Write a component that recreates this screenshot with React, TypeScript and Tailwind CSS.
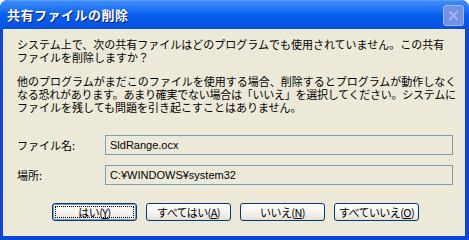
import React from "react";

const jp = { fontFamily: '"Noto Sans CJK JP", "Noto Sans", sans-serif' };
const field = { fontFamily: '"Liberation Sans", "Noto Sans CJK JP", sans-serif' };

const Btn = ({ label, k, def }: { label: string; k: string; def?: boolean }) => (
  <button
    className={`w-[85px] h-[18px] rounded-[3px] border border-[#003c74] bg-gradient-to-b from-white via-[#f6f5f0] to-[#e3e1d6] flex items-center justify-center p-[2px] text-[11px] leading-none tracking-[-0.6px] whitespace-nowrap text-black ${
      def ? "shadow-[inset_0_0_0_1px_#7da2ce]" : ""
    }`}
    style={jp}
  >
    <span
      className={`w-full h-full flex items-center justify-center ${def ? "outline-1 outline-dotted outline-black -outline-offset-1" : ""}`}
    >
      {label}(<span className="underline">{k}</span>)
    </span>
  </button>
);

export default function App() {
  return (
    <div className="w-[469px] h-[240px] flex flex-col bg-[#0a46d8] rounded-t-[8px] overflow-hidden" style={jp}>
      {/* title bar */}
      <div className="h-[29px] flex items-center justify-between pl-[7px] pr-[5px] bg-gradient-to-b from-[#3d8cfb] via-[#0760ef] to-[#0651e0] border-t border-[#5d9bff]">
        <span className="text-white font-bold text-[13px] tracking-[0.5px] [text-shadow:1px_1px_0_#0a1e7a]">
          共有ファイルの削除
        </span>
        <div className="w-[21px] h-[21px] rounded-[3px] bg-[#7590e8] border border-[#a8b8f0] flex items-center justify-center">
          <svg width="11" height="11" viewBox="0 0 11 11">
            <path d="M1.5 1.5 L9.5 9.5 M9.5 1.5 L1.5 9.5" stroke="#a9b6ec" strokeWidth="2" />
          </svg>
        </div>
      </div>
      {/* client */}
      <div className="flex-1 ml-[3px] mr-[4px] mb-[4px] bg-[#ece9d8] flex flex-col pl-[14px] pr-[4px] pt-[9px] text-[11px] leading-[13px] text-black">
        <p className="whitespace-nowrap">
          システム上で、次の共有ファイルはどのプログラムでも使用されていません。この共有
          <br />
          ファイルを削除しますか？
        </p>
        <p className="mt-[11px] whitespace-nowrap">
          他のプログラムがまだこのファイルを使用する場合、削除するとプログラムが動作しなく
          <br />
          <span className="tracking-[-0.25px]">
            なる恐れがあります。あまり確実でない場合は「いいえ」を選択してください。システムに
          </span>
          <br />
          ファイルを残しても問題を引き起こすことはありません。
        </p>
        <div className="mt-[21px] flex items-center">
          <span className="w-[88px]">ファイル名:</span>
          <div className="w-[348px] h-[20px] border border-[#7f9db9] flex items-center px-[4px]" style={field}>
            SldRange.ocx
          </div>
        </div>
        <div className="mt-[10px] flex items-center">
          <span className="w-[88px]">場所:</span>
          <div className="w-[348px] h-[20px] border border-[#7f9db9] flex items-center px-[4px]" style={field}>
            C:¥WINDOWS¥system32
          </div>
        </div>
        <div className="mt-[18px] ml-[35px] flex gap-[9px]">
          <Btn label="はい" k="Y" def />
          <Btn label="すべてはい" k="A" />
          <Btn label="いいえ" k="N" />
          <Btn label="すべていいえ" k="O" />
        </div>
      </div>
    </div>
  );
}
